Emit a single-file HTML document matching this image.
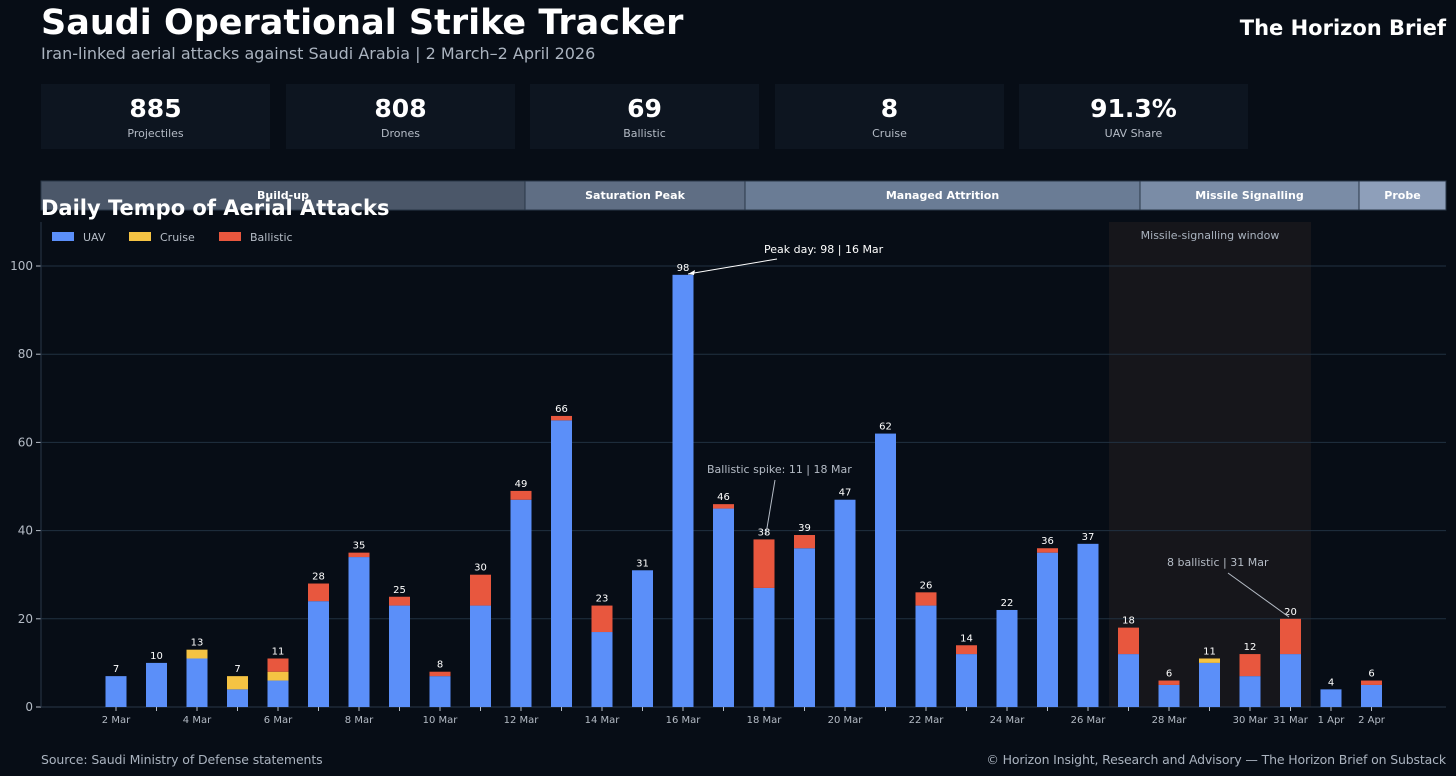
<!DOCTYPE html>
<html><head><meta charset="utf-8"><style>
body{margin:0;width:1456px;height:776px;background:#070d16;font-family:"DejaVu Sans","Liberation Sans",sans-serif;color:#fff;overflow:hidden;position:relative}
.t{position:absolute;white-space:nowrap}
.card{position:absolute;top:84px;width:229px;height:65px;background:#0d1520;text-align:center}
.card b{display:block;font-size:25px;margin-top:11px;line-height:28px}
.card span{display:block;font-size:11px;color:#b5bcc6;margin-top:4px}
</style></head><body>
<div class="t" style="left:41px;top:3px;font-size:35px;font-weight:bold">Saudi Operational Strike Tracker</div>
<div class="t" style="left:41px;top:44px;font-size:16px;color:#aab3bf">Iran-linked aerial attacks against Saudi Arabia | 2 March–2 April 2026</div>
<div class="t" style="right:10px;top:16px;font-size:21px;font-weight:bold">The Horizon Brief</div>
<div class="card" style="left:41px"><b>885</b><span>Projectiles</span></div>
<div class="card" style="left:286px"><b>808</b><span>Drones</span></div>
<div class="card" style="left:530px"><b>69</b><span>Ballistic</span></div>
<div class="card" style="left:775px"><b>8</b><span>Cruise</span></div>
<div class="card" style="left:1019px"><b>91.3%</b><span>UAV Share</span></div>
<svg id="s" width="1456" height="776" style="position:absolute;left:0;top:0" font-family="DejaVu Sans, Liberation Sans, sans-serif"></svg>
<div class="t" style="left:41px;top:196px;font-size:21px;font-weight:bold">Daily Tempo of Aerial Attacks</div>
<div class="t" style="left:41px;top:752px;font-size:12.5px;color:#aab3bf;letter-spacing:-0.1px">Source: Saudi Ministry of Defense statements</div>
<div class="t" style="right:10px;top:752px;font-size:12.5px;color:#aab3bf;letter-spacing:-0.15px">© Horizon Insight, Research and Advisory — The Horizon Brief on Substack</div>
<script>
var s='';
var ph=[[41,525,'#4b5769','Build-up'],[525,745,'#5f6e84','Saturation Peak'],[745,1140,'#6a7c95','Managed Attrition'],[1140,1359,'#7a8ca6','Missile Signalling'],[1359,1446,'#8e9fba','Probe']];
ph.forEach(function(p){s+='<rect x="'+p[0]+'" y="181" width="'+(p[1]-p[0])+'" height="29" fill="'+p[2]+'" stroke="#2a3748"/>';s+='<text x="'+((p[0]+p[1])/2)+'" y="199" fill="#fff" font-size="11" font-weight="bold" text-anchor="middle">'+p[3]+'</text>';});
s+='<rect x="1109" y="222" width="202" height="485" fill="#16161b"/>';
s+='<text x="1210" y="239" fill="#aab3bf" font-size="11" text-anchor="middle">Missile-signalling window</text>';
function Y(v){return 707-v*4.41;}
for(var g=0;g<=100;g+=20){var y=Y(g);if(g>0)s+='<line x1="41" x2="1446" y1="'+y+'" y2="'+y+'" stroke="#213141"/>';s+='<text x="33" y="'+(y+4)+'" fill="#b5bcc6" font-size="12" text-anchor="end">'+g+'</text><line x1="36" x2="41" y1="'+y+'" y2="'+y+'" stroke="#b5bcc6"/>';}
s+='<line x1="41" x2="41" y1="222" y2="707" stroke="#2a3748"/><line x1="41" x2="1446" y1="707" y2="707" stroke="#2a3748"/>';
var d=[[7,7,0,0],[10,10,0,0],[13,11,2,0],[7,4,3,0],[11,6,2,3],[28,24,0,4],[35,34,0,1],[25,23,0,2],[8,7,0,1],[30,23,0,7],[49,47,0,2],[66,65,0,1],[23,17,0,6],[31,31,0,0],[98,98,0,0],[46,45,0,1],[38,27,0,11],[39,36,0,3],[47,47,0,0],[62,62,0,0],[26,23,0,3],[14,12,0,2],[22,22,0,0],[36,35,0,1],[37,37,0,0],[18,12,0,6],[6,5,0,1],[11,10,1,0],[12,7,0,5],[20,12,0,8],[4,4,0,0],[6,5,0,1]];
var lab={0:'2 Mar',2:'4 Mar',4:'6 Mar',6:'8 Mar',8:'10 Mar',10:'12 Mar',12:'14 Mar',14:'16 Mar',16:'18 Mar',18:'20 Mar',20:'22 Mar',22:'24 Mar',24:'26 Mar',26:'28 Mar',28:'30 Mar',29:'31 Mar',30:'1 Apr',31:'2 Apr'};
d.forEach(function(b,i){var cx=116+i*40.5,x=cx-10.5,u=b[1],c=b[2],ba=b[3];
s+='<rect x="'+x+'" y="'+Y(u)+'" width="21" height="'+(u*4.41)+'" fill="#5b8ff9"/>';
if(c)s+='<rect x="'+x+'" y="'+Y(u+c)+'" width="21" height="'+(c*4.41)+'" fill="#f5c343"/>';
if(ba)s+='<rect x="'+x+'" y="'+Y(u+c+ba)+'" width="21" height="'+(ba*4.41)+'" fill="#e8573e"/>';
s+='<text x="'+cx+'" y="'+(Y(b[0])-4)+'" fill="#fff" font-size="10" text-anchor="middle">'+b[0]+'</text>';
s+='<line x1="'+cx+'" x2="'+cx+'" y1="707" y2="711" stroke="#b5bcc6"/>';
if(lab[i]!==undefined)s+='<text x="'+cx+'" y="723" fill="#b5bcc6" font-size="10" text-anchor="middle">'+lab[i]+'</text>';});
s+='<rect x="52" y="232" width="22" height="9" fill="#5b8ff9"/><rect x="129" y="232" width="22" height="9" fill="#f5c343"/><rect x="219" y="232" width="22" height="9" fill="#e8573e"/>';
s+='<g fill="#b5bcc6" font-size="11"><text x="83" y="241">UAV</text><text x="160" y="241">Cruise</text><text x="250" y="241">Ballistic</text></g>';
s+='<line x1="777" y1="259" x2="688" y2="274" stroke="#fff"/><path d="M688 274l7-4-1 5z" fill="#fff"/><text x="764" y="253" fill="#fff" font-size="11">Peak day: 98 | 16 Mar</text>';
s+='<text x="707" y="473" fill="#b5bcc6" font-size="11">Ballistic spike: 11 | 18 Mar</text><line x1="775" y1="480" x2="766" y2="534" stroke="#b5bcc6"/>';
s+='<text x="1167" y="566" fill="#b5bcc6" font-size="11">8 ballistic | 31 Mar</text><line x1="1228" y1="573" x2="1289" y2="617" stroke="#b5bcc6"/>';
document.getElementById('s').innerHTML=s;
</script>
</body></html>
